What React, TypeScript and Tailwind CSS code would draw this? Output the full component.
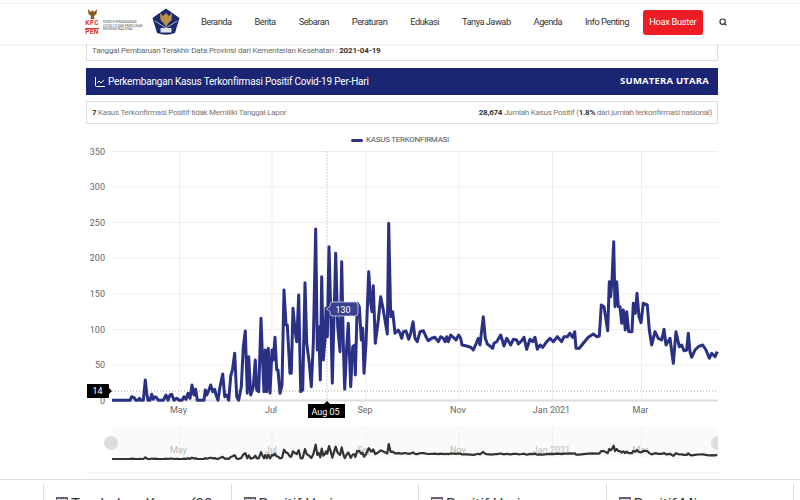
import { LineChart, Search } from "lucide-react";

const navItems = ["Beranda", "Berita", "Sebaran", "Peraturan", "Edukasi", "Tanya Jawab", "Agenda", "Info Penting"];

// [x, y] read off the chart at 3x
const raw1: number[][] = [
  [96,811],[150,811],[155,800],[162,803],[168,811],[175,811],[178,805],[183,811],[190,811],[196,750],[200,790],[204,811],[210,811],[215,793],[220,808],[225,800],[230,803],[235,811],[250,811],[258,795],[264,811],[270,795],[275,793],[282,811],[290,805],[298,811],[306,811],[312,800],[318,808],[324,790],[330,805],[336,765],[342,795],[347,778],[352,811],[372,811],[376,780],[380,795],[385,785],[392,765],[398,785],[404,778],[408,795],[414,811],[420,770],[428,732],[434,800],[440,795],[446,811],[452,740],[458,715],[464,670],[470,800],[476,811],[484,770],[490,650],[496,603],[502,790],[506,680],[512,795],[520,770],[526,690],[530,780],[536,785],[543,565],[548,700],[552,785],[556,660],[560,785],[565,655],[570,790],[576,660],[580,690],[585,622],[590,720],[594,720],[600,790],[606,765],[612,480],[618,585],[622,585],[630,730],[634,730],[639,535],[645,600],[650,635],[656,495],[662,785],[668,780],[675,458],[680,640],[688,700],[694,770],[700,640],[707,297],[712,660],[716,590],[721,750],[725,440],[730,690],[735,630],[738,535],[742,620],[747,350],[752,540],[757,760],[767,370],[773,590],[780,665],[785,395],[790,640],[794,778],[800,650],[805,580],[812,770],[818,650],[824,645],[826,735],[832,520],[838,530],[844,630],[848,595],[852,730],[858,640],[866,425],[872,520],[876,545],[880,467],[886,640],[895,570],[902,500],[910,540],[922,612],[926,280],[932,560],[938,545],[945,610],[955,600],
];
const raw2: number[][] = [
  [0,610],[5,625],[10,605],[18,603],[26,628],[32,610],[39,575],[45,625],[52,635],[60,605],[70,602],[78,620],[85,632],[95,625],[105,622],[115,635],[122,620],[130,625],[135,635],[140,620],[145,635],[152,615],[160,622],[168,630],[176,615],[182,625],[186,645],[200,648],[212,652],[220,660],[228,642],[235,625],[240,645],[250,560],[256,625],[262,642],[270,648],[278,655],[282,640],[290,635],[302,615],[312,648],[320,625],[332,645],[340,628],[350,630],[355,642],[365,632],[372,622],[380,658],[390,628],[398,635],[405,622],[412,658],[420,645],[428,652],[440,635],[450,625],[460,635],[472,620],[485,635],[492,620],[502,620],[510,610],[518,622],[524,605],[528,655],[538,655],[550,640],[565,622],[580,612],[590,620],[598,618],[604,525],[612,530],[623,602],[628,455],[632,500],[636,450],[641,335],[645,530],[650,455],[655,530],[660,530],[665,580],[670,540],[676,600],[680,545],[686,605],[696,605],[700,520],[706,550],[711,490],[717,560],[723,578],[730,520],[742,525],[748,600],[755,645],[765,605],[775,625],[785,630],[792,598],[798,645],[810,625],[820,700],[828,605],[838,650],[845,645],[852,662],[860,660],[865,610],[870,665],[875,682],[885,660],[895,650],[908,645],[918,660],[928,685],[935,670],[945,680],[952,665],
];

// px relative to the chart svg, which starts at page (80, 130)
const series = [
  ...raw1.map(([x, y]) => [x / 3, y / 3]),
  ...raw2.map(([x, y]) => [320 + x / 3, y / 3]),
];
const mainLine = series.map(([x, y]) => `${x.toFixed(1)},${y.toFixed(1)}`).join(" ");
const miniLine = series
  .map(([x, y]) => `${x.toFixed(1)},${(329 - (270.3 - y) * 0.084).toFixed(1)}`)
  .join(" ");

const yTicks = [
  { label: "350", y: 21.5 },
  { label: "300", y: 57 },
  { label: "250", y: 92.5 },
  { label: "200", y: 128 },
  { label: "150", y: 164 },
  { label: "100", y: 199.5 },
  { label: "50", y: 235 },
  { label: "0", y: 270.5 },
];
const xTicks = [
  { label: "May", x: 99.5 },
  { label: "Jul", x: 192 },
  { label: "Sep", x: 286 },
  { label: "Nov", x: 379 },
  { label: "Jan 2021", x: 472.5 },
  { label: "Mar", x: 561.5 },
];

function Chart() {
  return (
    <svg width="660" height="345" viewBox="0 0 660 345" className="block" fontFamily="Roboto, sans-serif">
      {yTicks.map((t) => (
        <g key={t.label}>
          <line x1="32" x2="638" y1={t.y} y2={t.y} stroke="#eeeeee" />
          <text x="25" y={t.y + 3} textAnchor="end" fontSize="9" fill="#666">{t.label}</text>
        </g>
      ))}
      {xTicks.map((t) => (
        <g key={t.label}>
          <line x1={t.x} x2={t.x} y1="21.5" y2="270.5" stroke="#eeeeee" />
          <text x={t.x - 1} y="283" textAnchor="middle" fontSize="9" fill="#666">{t.label}</text>
        </g>
      ))}
      <line x1="32" x2="638" y1="270.5" y2="270.5" stroke="#dddddd" strokeWidth="2" />

      {/* crosshair */}
      <line x1="247" x2="247" y1="21.5" y2="270.5" stroke="#aaaaaa" strokeDasharray="1 2" />
      <line x1="32" x2="638" y1="261" y2="261" stroke="#aaaaaa" strokeDasharray="1 2" />

      <polyline points={mainLine} fill="none" stroke="#2a3184" strokeWidth="3" strokeLinejoin="round" />

      {/* data label */}
      <path d="M250 175 a3 3 0 0 1 3-3 h22 a3 3 0 0 1 3 3 v8 a3 3 0 0 1-3 3 h-22 a3 3 0 0 1-3-3 v-1.5 l-3.5-2.5 3.5-2.5 z" fill="#3a4190" stroke="#d8daea" strokeWidth="0.8" />
      <text x="263" y="182.5" textAnchor="middle" fontSize="9" fill="#fff">130</text>

      {/* y crosshair label */}
      <path d="M7 254 h21 a1 1 0 0 1 1 1 v3 l3 3 -3 3 v3 a1 1 0 0 1-1 1 h-21 z" fill="#000" />
      <text x="17.5" y="264" textAnchor="middle" fontSize="9" fill="#fff">14</text>

      {/* x crosshair label */}
      <path d="M228 274 h16 l3-3 3 3 h15 v14 h-37 z" fill="#000" />
      <text x="245.5" y="284.5" textAnchor="middle" fontSize="9" fill="#fff">Aug 05</text>

      {/* navigator */}
      <rect x="32" y="297" width="606" height="32" fill="#fafafa" />
      {xTicks.map((t) => (
        <g key={t.label}>
          <line x1={t.x} x2={t.x} y1="297" y2="329" stroke="#f0f0f0" />
          <text x={t.x - 1} y="323" textAnchor="middle" fontSize="9" fill="#bbb">{t.label}</text>
        </g>
      ))}
      <polyline points={miniLine} fill="none" stroke="#333333" strokeWidth="2.2" strokeLinejoin="round" />
      <circle cx="31" cy="313" r="7" fill="#dddddd" />
      <circle cx="638" cy="313" r="7" fill="#dddddd" clipPath="url(#navClip)" />
      <defs>
        <clipPath id="navClip">
          <rect x="600" y="290" width="38" height="50" />
        </clipPath>
      </defs>
    </svg>
  );
}

function Logos() {
  return (
    <div className="flex items-center">
      <div className="flex w-[67px] items-end pt-[1px]">
        <div className="flex w-[14px] flex-col items-center">
          <svg width="11" height="10" viewBox="0 0 11 10" className="mb-[1px]">
            <path d="M1 0 L4 3 L5.5 1 L7 3 L10 0 L9.5 5 L7 7 L7.5 10 H3.5 L4 7 L1.5 5 Z" fill="#8a5a20" />
          </svg>
          <span className="text-[6.5px] leading-[7px] font-bold tracking-[0.3px] text-[#e2342c]">KPC</span>
          <span className="my-[0.5px] h-px w-[14px] bg-[#e2342c]" />
          <span className="text-[6.5px] leading-[7px] font-bold tracking-[0.3px] text-[#e2342c]">PEN</span>
        </div>
        <div className="ml-[4px] mb-[4px] text-[3.2px] leading-[3.6px] whitespace-nowrap text-[#555]">
          <div>KOMITE PENANGANAN</div>
          <div>COVID-19 DAN PEMULIHAN</div>
          <div>EKONOMI NASIONAL</div>
        </div>
      </div>
      <svg width="28" height="28" viewBox="0 0 28 28" className="shrink-0">
        <path d="M14 0.5 L27.5 10 L23 25 Q14 28.5 5 25 L0.5 10 Z" fill="#1c2a6e" />
        <path d="M3 13 L14 20 L25 13" fill="none" stroke="#e8e8f2" strokeWidth="0.7" />
        <path d="M8 5 L11 8 L14 5 L17 8 L20 5 L19.5 12 L16.5 15 L14 19 L11.5 15 L8.5 12 Z" fill="#b9924a" />
        <rect x="8.5" y="20" width="11" height="4.5" fill="#dfe0ec" />
      </svg>
    </div>
  );
}

export default function App() {
  return (
    <div className="h-[500px] w-[800px] overflow-hidden bg-white font-['Roboto',sans-serif] text-[#444]">
      <nav className="relative z-10 flex h-11 items-center bg-white pl-[85px] shadow-[0_1px_2px_rgba(0,0,0,0.08)]">
        <div className="absolute inset-x-0 top-[3px] h-px bg-[#eeeeee]" />
        <Logos />
        <div className="ml-[21px] flex items-center gap-[23px] whitespace-nowrap text-[9.25px] tracking-[-0.5px] text-[#333]">
          {navItems.map((item) => (
            <span key={item}>{item}</span>
          ))}
        </div>
        <span className="ml-[14px] flex h-[25px] w-[60px] items-center justify-center rounded-[3px] bg-[#ee1c25] text-[9.25px] tracking-[-0.3px] whitespace-nowrap text-white">
          Hoax Buster
        </span>
        <Search className="ml-[16px] h-[8px] w-[8px] text-[#333]" strokeWidth={3.5} />
      </nav>

      <div className="ml-[86px] w-[632px]">
        <div className="flex h-[17px] items-center border-x border-b border-[#ddd] pb-[3px] pl-[5px] text-[8px] tracking-[-0.17px] text-[#666]">
          <span>
            Tanggal Pembaruan Terakhir Data Provinsi dari Kementerian Kesehatan : <b className="text-[#333]">2021-04-19</b>
          </span>
        </div>

        <div className="mt-[7px] flex h-[27px] items-center justify-between bg-[#1a2573] pl-[8px] pr-[9px] text-white">
          <span className="flex items-center gap-[2px] text-[10px] tracking-[-0.2px]">
            <LineChart className="h-3 w-3" strokeWidth={2} />
            Perkembangan Kasus Terkonfirmasi Positif Covid-19 Per-Hari
          </span>
          <b className="font-['Open_Sans',sans-serif] text-[9.5px] tracking-[0.2px]">SUMATERA UTARA</b>
        </div>

        <div className="mt-[6px] flex h-[23px] items-center justify-between border border-[#ddd] px-[5px] text-[8px] tracking-[-0.25px] text-[#777]">
          <span>
            <b className="text-[#333]">7</b> Kasus Terkonfirmasi Positif tidak Memiliki Tanggal Lapor
          </span>
          <span>
            <b className="text-[#333]">28,674</b> Jumlah Kasus Positif (<b className="text-[#333]">1.8%</b> dari jumlah terkonfirmasi nasional)
          </span>
        </div>
      </div>

      <div className="mt-[10px] flex h-3 justify-center text-[8px] tracking-[-0.25px] text-[#555]">
        <span className="flex items-center gap-[3px]">
          <span className="h-[3px] w-3 rounded-sm bg-[#2a3184]" />
          KASUS TERKONFIRMASI
        </span>
      </div>

      <div className="-mt-[16px] ml-[80px]">
        <Chart />
      </div>

      <div className="ml-[87px] -mt-[3px] h-px w-[631px] bg-[#f3f3f3]" />
      <div className="mt-[6px] h-px w-full bg-[#dddddd]" />

      <div className="mt-[4px] ml-[43px] flex h-4 text-[15px] text-[#333]">
        {["Tambahan Kasus (38", "Positif Harian", "Positif Harian", "Positif Mingguan"].map((label, i) => (
          <div key={i} className="flex w-[187.5px] items-start gap-[3px] border-l border-[#dddddd] pl-3 pt-[13px]">
            <span className="h-2 w-3 shrink-0 border-t-2 border-x border-[#666] bg-[#e8dff0]" />
            <span className="leading-none whitespace-nowrap">{label}</span>
          </div>
        ))}
        <div className="border-l border-[#dddddd]" />
      </div>
    </div>
  );
}
